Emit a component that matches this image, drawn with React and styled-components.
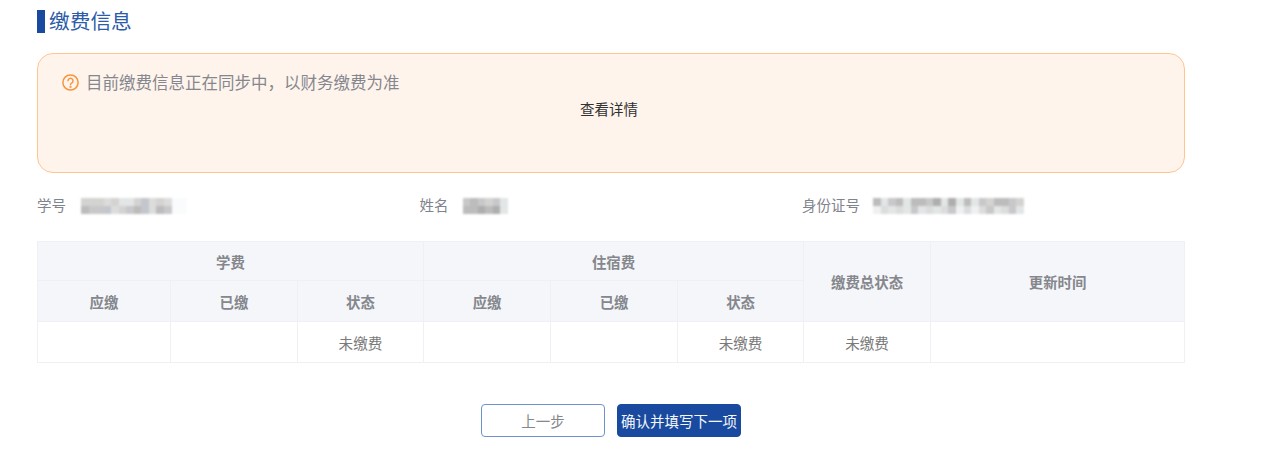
import React from 'react'
import styled, { createGlobalStyle } from 'styled-components'

const GlobalStyle = createGlobalStyle`
	html, body {
		margin: 0;
		padding: 0;
		background: #fff;
		font-family: "Liberation Sans", "Noto Sans CJK SC", sans-serif;
	}
`
const Page = styled.div`
	width: 1148px;
	height: 462px;
	padding: 10px 0 0 37px;
	box-sizing: content-box;
`
const Title = styled.h2`
	display: flex;
	align-items: center;
	margin: 0;
	height: 23px;
	border-left: 8px solid #194a9f;
	padding-left: 4px;
	font-size: 20.7px;
	font-weight: 400;
	line-height: 23px;
	color: #2c5ba8;
`
const Notice = styled.div`
	box-sizing: border-box;
	height: 120px;
	margin-top: 20px;
	padding: 16px 24px 0;
	background: #fff4ec;
	border: 1px solid #ffc58f;
	border-radius: 16px;
`
const NoticeRow = styled.div`
	display: flex;
	align-items: center;
	gap: 7px;
	height: 24px;
	font-size: 16.5px;
	color: #85878f;
`
const DetailText = styled.div`
	margin-top: 4px;
	padding-right: 4px;
	text-align: center;
	font-size: 14.5px;
	line-height: 24px;
	color: #303133;
`
const InfoRow = styled.div`
	display: grid;
	grid-template-columns: 382.5px 382.5px 1fr;
	height: 68px;
	padding-top: 25px;
	box-sizing: border-box;
`
const InfoItem = styled.div`
	display: flex;
	align-items: center;
	height: 16px;
	font-size: 14.5px;
	line-height: 16px;
	color: #7f838c;
`
const InfoLabel = styled.span`
	margin-right: ${(p) => p.$gap}px;
`
const Mosaic = styled.div`
	display: grid;
	grid-template-columns: repeat(${(p) => p.$cols}, 7.55px);
	grid-auto-rows: 8px;
	filter: blur(0.8px);
`
const Cell = styled.span`
	background: ${(p) => p.$color};
`
const Table = styled.table`
	width: 1147px;
	table-layout: fixed;
	border-collapse: collapse;
	border: 1px solid #eef0f5;
	font-size: 14.6px;
	color: #7a7a7a;
`
const Head = styled.th`
	height: ${(p) => p.$h}px;
	padding: 0;
	background: #f4f6fa;
	border: 1px solid #eef0f5;
	font-size: 14.4px;
	font-weight: 700;
	color: #85878c;
`
const Td = styled.td`
	height: 40px;
	padding: 0;
	text-align: center;
	border: 1px solid #eef0f5;
`
const Actions = styled.div`
	display: flex;
	justify-content: center;
	gap: 12px;
	margin-top: 41px;
`
const Button = styled.button`
	box-sizing: border-box;
	width: 124px;
	height: 33px;
	padding: 0;
	border-radius: 4px;
	border: 1px solid ${(p) => (p.$primary ? '#194a9f' : '#6e93cb')};
	background: ${(p) => (p.$primary ? '#194a9f' : '#fff')};
	color: ${(p) => (p.$primary ? '#f3f6fb' : '#85878c')};
	font-family: inherit;
	font-size: 14.5px;
	white-space: nowrap;
`

const tone = {
	a: '#d4d3d1', b: '#c8c8ca', c: '#bcbcbc', d: '#e3e6e6', e: '#eef0f2',
	f: '#aeaeae', g: '#fafbfc', h: '#c3c6cc', i: '#dcdcdc',
}

const idCells = 'aaaiaddahiaigg' + 'cbbhiabchicbgg'
const nameCells = 'bcbabd' + 'ccfcfd'
const cardCells = 'cdbcdccbfdfdcdbaccba' + 'eididbdidibeieibdibd'

const Blur = ({ cells, cols }) => (
	<Mosaic $cols={cols}>
		{cells.split('').map((c, i) => (
			<Cell key={i} $color={tone[c]} />
		))}
	</Mosaic>
)

const QuestionIcon = () => (
	<svg width='17' height='17' viewBox='0 0 17 17' fill='none' stroke='#f7953f' strokeWidth='1.5' strokeLinecap='round'>
		<circle cx='8.5' cy='8.5' r='7.6' />
		<path d='M6 6.8a2.5 2.5 0 1 1 3.9 2.1c-.9.5-1.4 1-1.4 1.9' />
		<circle cx='8.5' cy='12.9' r='.4' />
	</svg>
)

const widths = [133, 127, 126, 127, 127, 126, 127, 254]

const App = () => {
	return (
		<Page>
			<GlobalStyle />
			<Title>缴费信息</Title>
			<Notice>
				<NoticeRow>
					<QuestionIcon />
					目前缴费信息正在同步中，以财务缴费为准
				</NoticeRow>
				<DetailText>查看详情</DetailText>
			</Notice>
			<InfoRow>
				<InfoItem>
					<InfoLabel $gap={15}>学号</InfoLabel>
					<Blur cells={idCells} cols={14} />
				</InfoItem>
				<InfoItem>
					<InfoLabel $gap={14}>姓名</InfoLabel>
					<Blur cells={nameCells} cols={6} />
				</InfoItem>
				<InfoItem>
					<InfoLabel $gap={13}>身份证号</InfoLabel>
					<Blur cells={cardCells} cols={20} />
				</InfoItem>
			</InfoRow>
			<Table>
				<colgroup>
					{widths.map((w, i) => (
						<col key={i} style={{ width: w }} />
					))}
				</colgroup>
				<thead>
					<tr>
						<Head $h={38} colSpan={3}>学费</Head>
						<Head $h={38} colSpan={3}>住宿费</Head>
						<Head $h={38} rowSpan={2}>缴费总状态</Head>
						<Head $h={38} rowSpan={2}>更新时间</Head>
					</tr>
					<tr>
						<Head $h={40}>应缴</Head>
						<Head $h={40}>已缴</Head>
						<Head $h={40}>状态</Head>
						<Head $h={40}>应缴</Head>
						<Head $h={40}>已缴</Head>
						<Head $h={40}>状态</Head>
					</tr>
				</thead>
				<tbody>
					<tr>
						<Td />
						<Td />
						<Td>未缴费</Td>
						<Td />
						<Td />
						<Td>未缴费</Td>
						<Td>未缴费</Td>
						<Td />
					</tr>
				</tbody>
			</Table>
			<Actions>
				<Button>上一步</Button>
				<Button $primary>确认并填写下一项</Button>
			</Actions>
		</Page>
	)
}

export default App
